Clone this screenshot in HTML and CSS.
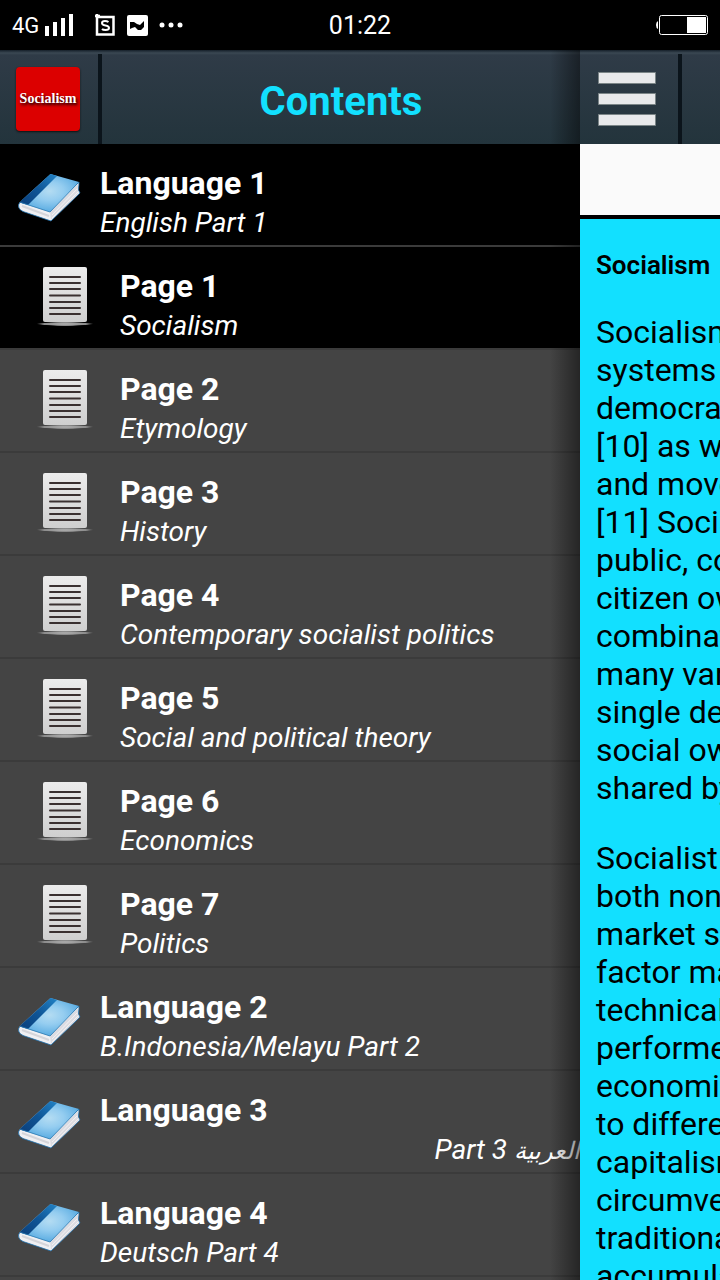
FILE: index.html
```html
<!DOCTYPE html>
<html lang="en">
<head>
    <meta charset="UTF-8">
    <meta name="viewport" content="width=device-width, initial-scale=1.0">
    <title>Socialism</title>
    <link rel="stylesheet" href="styles.css">
</head>
<body>
    <!-- Shared icons -->
    <svg class="sprite" aria-hidden="true">
        <defs>
            <radialGradient id="cover" cx="0.5" cy="0.45" r="0.6">
                <stop offset="0" stop-color="#b4dcf2"/>
                <stop offset="0.4" stop-color="#95cdf0"/>
                <stop offset="1" stop-color="#4fa6df"/>
            </radialGradient>
            <linearGradient id="spine" x1="0" y1="1" x2="1" y2="0">
                <stop offset="0" stop-color="#0a3f7c"/>
                <stop offset="0.5" stop-color="#0f5596"/>
                <stop offset="1" stop-color="#2283c6"/>
            </linearGradient>
            <linearGradient id="paper" x1="0" y1="0" x2="0" y2="1">
                <stop offset="0" stop-color="#ececec"/>
                <stop offset="1" stop-color="#cfcfcf"/>
            </linearGradient>
            <radialGradient id="stand">
                <stop offset="0" stop-color="#b4b4b4"/>
                <stop offset="0.75" stop-color="#8c8c8c"/>
                <stop offset="1" stop-color="#888888" stop-opacity="0"/>
            </radialGradient>
        </defs>
        <symbol id="book" viewBox="0 0 64 50">
            <path d="M2 29Q-0.500 32 1 35Q2 37 5 38.500L33 48L62 20L60.500 17L61 9L32 36Z" fill="#f0f0f3" stroke="#1c6dab" stroke-width="0.800"/>
            <path d="M32 39L60.500 11L59.500 17L61 20L33 47Z" fill="#dcdce2"/>
            <path d="M34 42L59 16M34 45L60 19" stroke="#f6f6f8" stroke-width="0.800" fill="none"/>
            <path d="M4 33L31 43" stroke="#d5d5da" stroke-width="2" fill="none"/>
            <path d="M32.500 1L61 9L32 39L2 29.500L4 27Z" fill="url(#cover)"/>
            <path d="M32.500 1L39 3L10 32L2 29.500L4 27Z" fill="url(#spine)"/>
            <path d="M3 29.500L32 39L61 9" stroke="#2877b0" stroke-width="0.800" fill="none"/>
        </symbol>
        <symbol id="page" viewBox="0 0 58 60">
            <path d="M0 57Q1 55 7 55H51Q57 55 58 57Q45 59 29 59Q13 59 0 57Z" fill="url(#stand)"/>
            <rect x="7" y="0" width="44" height="55" rx="2" fill="url(#paper)"/>
            <path d="M14 10H44M14 16H44M14 22H44M14 28.500H44M14 35H44M14 41H44M14 47H44" stroke="#3a3030" stroke-width="2" stroke-linecap="round"/>
        </symbol>
    </svg>

    <div class="status">
        <div class="status-left">
            <span class="network">4G</span>
            <svg class="signal" width="28" height="22" viewBox="0 0 28 22" fill="#fff"><path d="M0 12h4v10H0zM8 8h4v14H8zM16 4h4v18h-4zM24 0h4v22h-4z"/></svg>
            <svg width="20" height="22" viewBox="0 0 20 22" fill="none" stroke="#fff">
                <path d="M2 3H18.500V20.500H2ZM2 0V4M0 2H5" stroke-width="2.500"/>
                <path d="M13.500 8Q12 7 10 7Q7 7 7 9Q7 11 10.500 11.500Q14 12 14 14Q14 16 10.500 16Q8 16 7 15" stroke-width="2"/>
            </svg>
            <svg class="app" width="21" height="21" viewBox="0 0 21 21">
                <rect width="21" height="21" rx="2" fill="#fff"/>
                <path d="M3 7L7 7L10 9L13 10L17 6V12L14 15L11 15L8 12L5 13L3 14Z" fill="#000"/>
            </svg>
            <svg class="more" width="24" height="6" viewBox="0 0 24 6" fill="#fff"><circle cx="3" cy="3" r="2.500"/><circle cx="12" cy="3" r="2.500"/><circle cx="21" cy="3" r="2.500"/></svg>
        </div>
        <span class="clock">01:22</span>
        <svg class="battery" width="52" height="20" viewBox="0 0 52 20" fill="none">
            <rect x="3.500" y="0.500" width="48" height="19" rx="2" stroke="#fff"/>
            <path d="M31 2H50V18H31ZM2 6V14Q0 13 0 10Q0 7 2 6Z" fill="#fff"/>
        </svg>
    </div>

    <div class="screen">
        <nav class="drawer">
            <header class="bar">
                <a class="logo-cell" href="#"><span class="logo">Socialism</span></a>
                <h1 class="bar-title">Contents</h1>
            </header>
            <a class="item active" href="#">
                <svg class="icon-book"><use href="#book"/></svg>
                <span class="label"><strong>Language 1</strong><em>English Part 1</em></span>
            </a>
            <a class="item child active" href="#">
                <svg class="icon-page"><use href="#page"/></svg>
                <span class="label"><strong>Page 1</strong><em>Socialism</em></span>
            </a>
            <a class="item child" href="#">
                <svg class="icon-page"><use href="#page"/></svg>
                <span class="label"><strong>Page 2</strong><em>Etymology</em></span>
            </a>
            <a class="item child" href="#">
                <svg class="icon-page"><use href="#page"/></svg>
                <span class="label"><strong>Page 3</strong><em>History</em></span>
            </a>
            <a class="item child" href="#">
                <svg class="icon-page"><use href="#page"/></svg>
                <span class="label"><strong>Page 4</strong><em>Contemporary socialist politics</em></span>
            </a>
            <a class="item child" href="#">
                <svg class="icon-page"><use href="#page"/></svg>
                <span class="label"><strong>Page 5</strong><em>Social and political theory</em></span>
            </a>
            <a class="item child" href="#">
                <svg class="icon-page"><use href="#page"/></svg>
                <span class="label"><strong>Page 6</strong><em>Economics</em></span>
            </a>
            <a class="item child" href="#">
                <svg class="icon-page"><use href="#page"/></svg>
                <span class="label"><strong>Page 7</strong><em>Politics</em></span>
            </a>
            <a class="item" href="#">
                <svg class="icon-book"><use href="#book"/></svg>
                <span class="label"><strong>Language 2</strong><em>B.Indonesia/Melayu Part 2</em></span>
            </a>
            <a class="item" href="#">
                <svg class="icon-book"><use href="#book"/></svg>
                <span class="label"><strong>Language 3</strong><em dir="rtl"><span class="arabic" lang="ar">العربية</span> Part 3</em></span>
            </a>
            <a class="item" href="#">
                <svg class="icon-book"><use href="#book"/></svg>
                <span class="label"><strong>Language 4</strong><em>Deutsch Part 4</em></span>
            </a>
        </nav>

        <main class="content">
            <header class="bar">
                <button class="menu" type="button" aria-label="Menu">
                    <svg width="58" height="54" viewBox="0 0 58 54" fill="#e8e9eb" stroke="#7b8587"><path d="M0.500 0.500H57.500V11.500H0.500ZM0.500 21.500H57.500V32.500H0.500ZM0.500 42.500H57.500V53.500H0.500Z"/></svg>
                </button>
            </header>
            <div class="banner"></div>
            <article class="article">
                <h2>Socialism</h2>
                <p>Socialism<br>systems<br>democracy<br>[10] as well<br>and movements<br>[11] Social<br>public, cooperative<br>citizen ownership<br>combination<br>many varieties<br>single definition<br>social ownership<br>shared by</p>
                <p>Socialist<br>both non-market<br>market socialism<br>factor markets<br>technical<br>performed<br>economic<br>to different<br>capitalism<br>circumvent<br>traditionally<br>accumulation</p>
            </article>
        </main>
    </div>
</body>
</html>
```

FILE: styles.css
```css
* {
    box-sizing: border-box;
}

body {
    display: flex;
    flex-direction: column;
    height: 100vh;
    margin: 0;
    overflow: hidden;
    background: #000;
    color: #fff;
    font-family: Roboto, "DejaVu Sans", sans-serif;
}

a {
    color: inherit;
    text-decoration: none;
}

.sprite {
    position: absolute;
    width: 0;
    height: 0;
}

/* Status bar */
.status {
    display: grid;
    grid-template-columns: 1fr auto 1fr;
    align-items: center;
    flex: none;
    height: 50px;
    padding: 0 12px;
}

.status-left {
    display: flex;
    align-items: center;
}

.network {
    width: 33px;
    font-size: 22px;
}

.signal {
    margin-right: 22px;
}

.app {
    margin-left: 12px;
}

.more {
    margin-left: 11px;
}

.clock {
    font-size: 25px;
}

.battery {
    justify-self: end;
}

/* Drawer and page behind it */
.screen {
    display: flex;
    flex: 1;
    min-height: 0;
}

.drawer {
    position: relative;
    flex: 1;
    min-width: 0;
    overflow: hidden;
    background: #444;
}

.drawer::after {
    content: "";
    position: absolute;
    top: 0;
    right: 0;
    bottom: 0;
    width: 30px;
    background: linear-gradient(to right, rgba(0, 0, 0, 0), rgba(0, 0, 0, 0.45));
    pointer-events: none;
}

.content {
    width: 140px;
    overflow: hidden;
    background: #12e0ff;
    color: #000;
}

.bar {
    display: flex;
    height: 94px;
    padding-top: 4px;
    background: linear-gradient(#15202a, #3b4853 3px, #2f3b47 5px, #23343c);
}

.logo-cell, .menu {
    display: flex;
    align-items: center;
    flex: none;
    width: 102px;
    padding: 0 0 0 16px;
    border: 0;
    border-right: 4px solid #0b141b;
    background: none;
}

.menu {
    padding-left: 18px;
}

.logo {
    width: 64px;
    border-radius: 4px;
    background: #dc0000;
    box-shadow: 0 1px 2px #111;
    font-family: "Liberation Serif", serif;
    font-size: 14px;
    font-weight: bold;
    line-height: 64px;
    text-align: center;
    text-shadow: 1px 2px 3px #000;
}

.bar-title {
    flex: 1;
    margin: 0;
    color: #12e0ff;
    font-size: 40px;
    line-height: 96px;
    text-align: center;
}

/* Contents list */
.item {
    display: flex;
    height: 103px;
    padding: 20px 0 0 18px;
    border-bottom: 2px solid #3b3b3b;
}

.item.active {
    background: #000;
}

.child {
    padding-left: 36px;
}

.icon-book {
    flex: none;
    width: 64px;
    height: 50px;
    margin: 9px 18px 0 0;
}

.icon-page {
    flex: none;
    width: 58px;
    height: 60px;
    margin-right: 26px;
}

.label {
    display: flex;
    flex: 1;
    flex-direction: column;
    white-space: nowrap;
}

.label strong {
    font-size: 32px;
    line-height: 38px;
}

.label em {
    font-size: 28px;
    line-height: 42px;
}

.arabic {
    font-size: 24px;
    line-height: 24px;
}

/* Article */
.banner {
    height: 75px;
    border-bottom: 4px solid #000;
    background: #fafafa;
}

.article {
    padding: 26px 16px 0;
    white-space: nowrap;
}

.article h2 {
    margin: 0 0 28px;
    font-size: 26px;
    font-weight: 600;
    line-height: 40px;
}

.article p {
    margin: 0 0 32px;
    font-size: 32px;
    line-height: 38px;
}
```
